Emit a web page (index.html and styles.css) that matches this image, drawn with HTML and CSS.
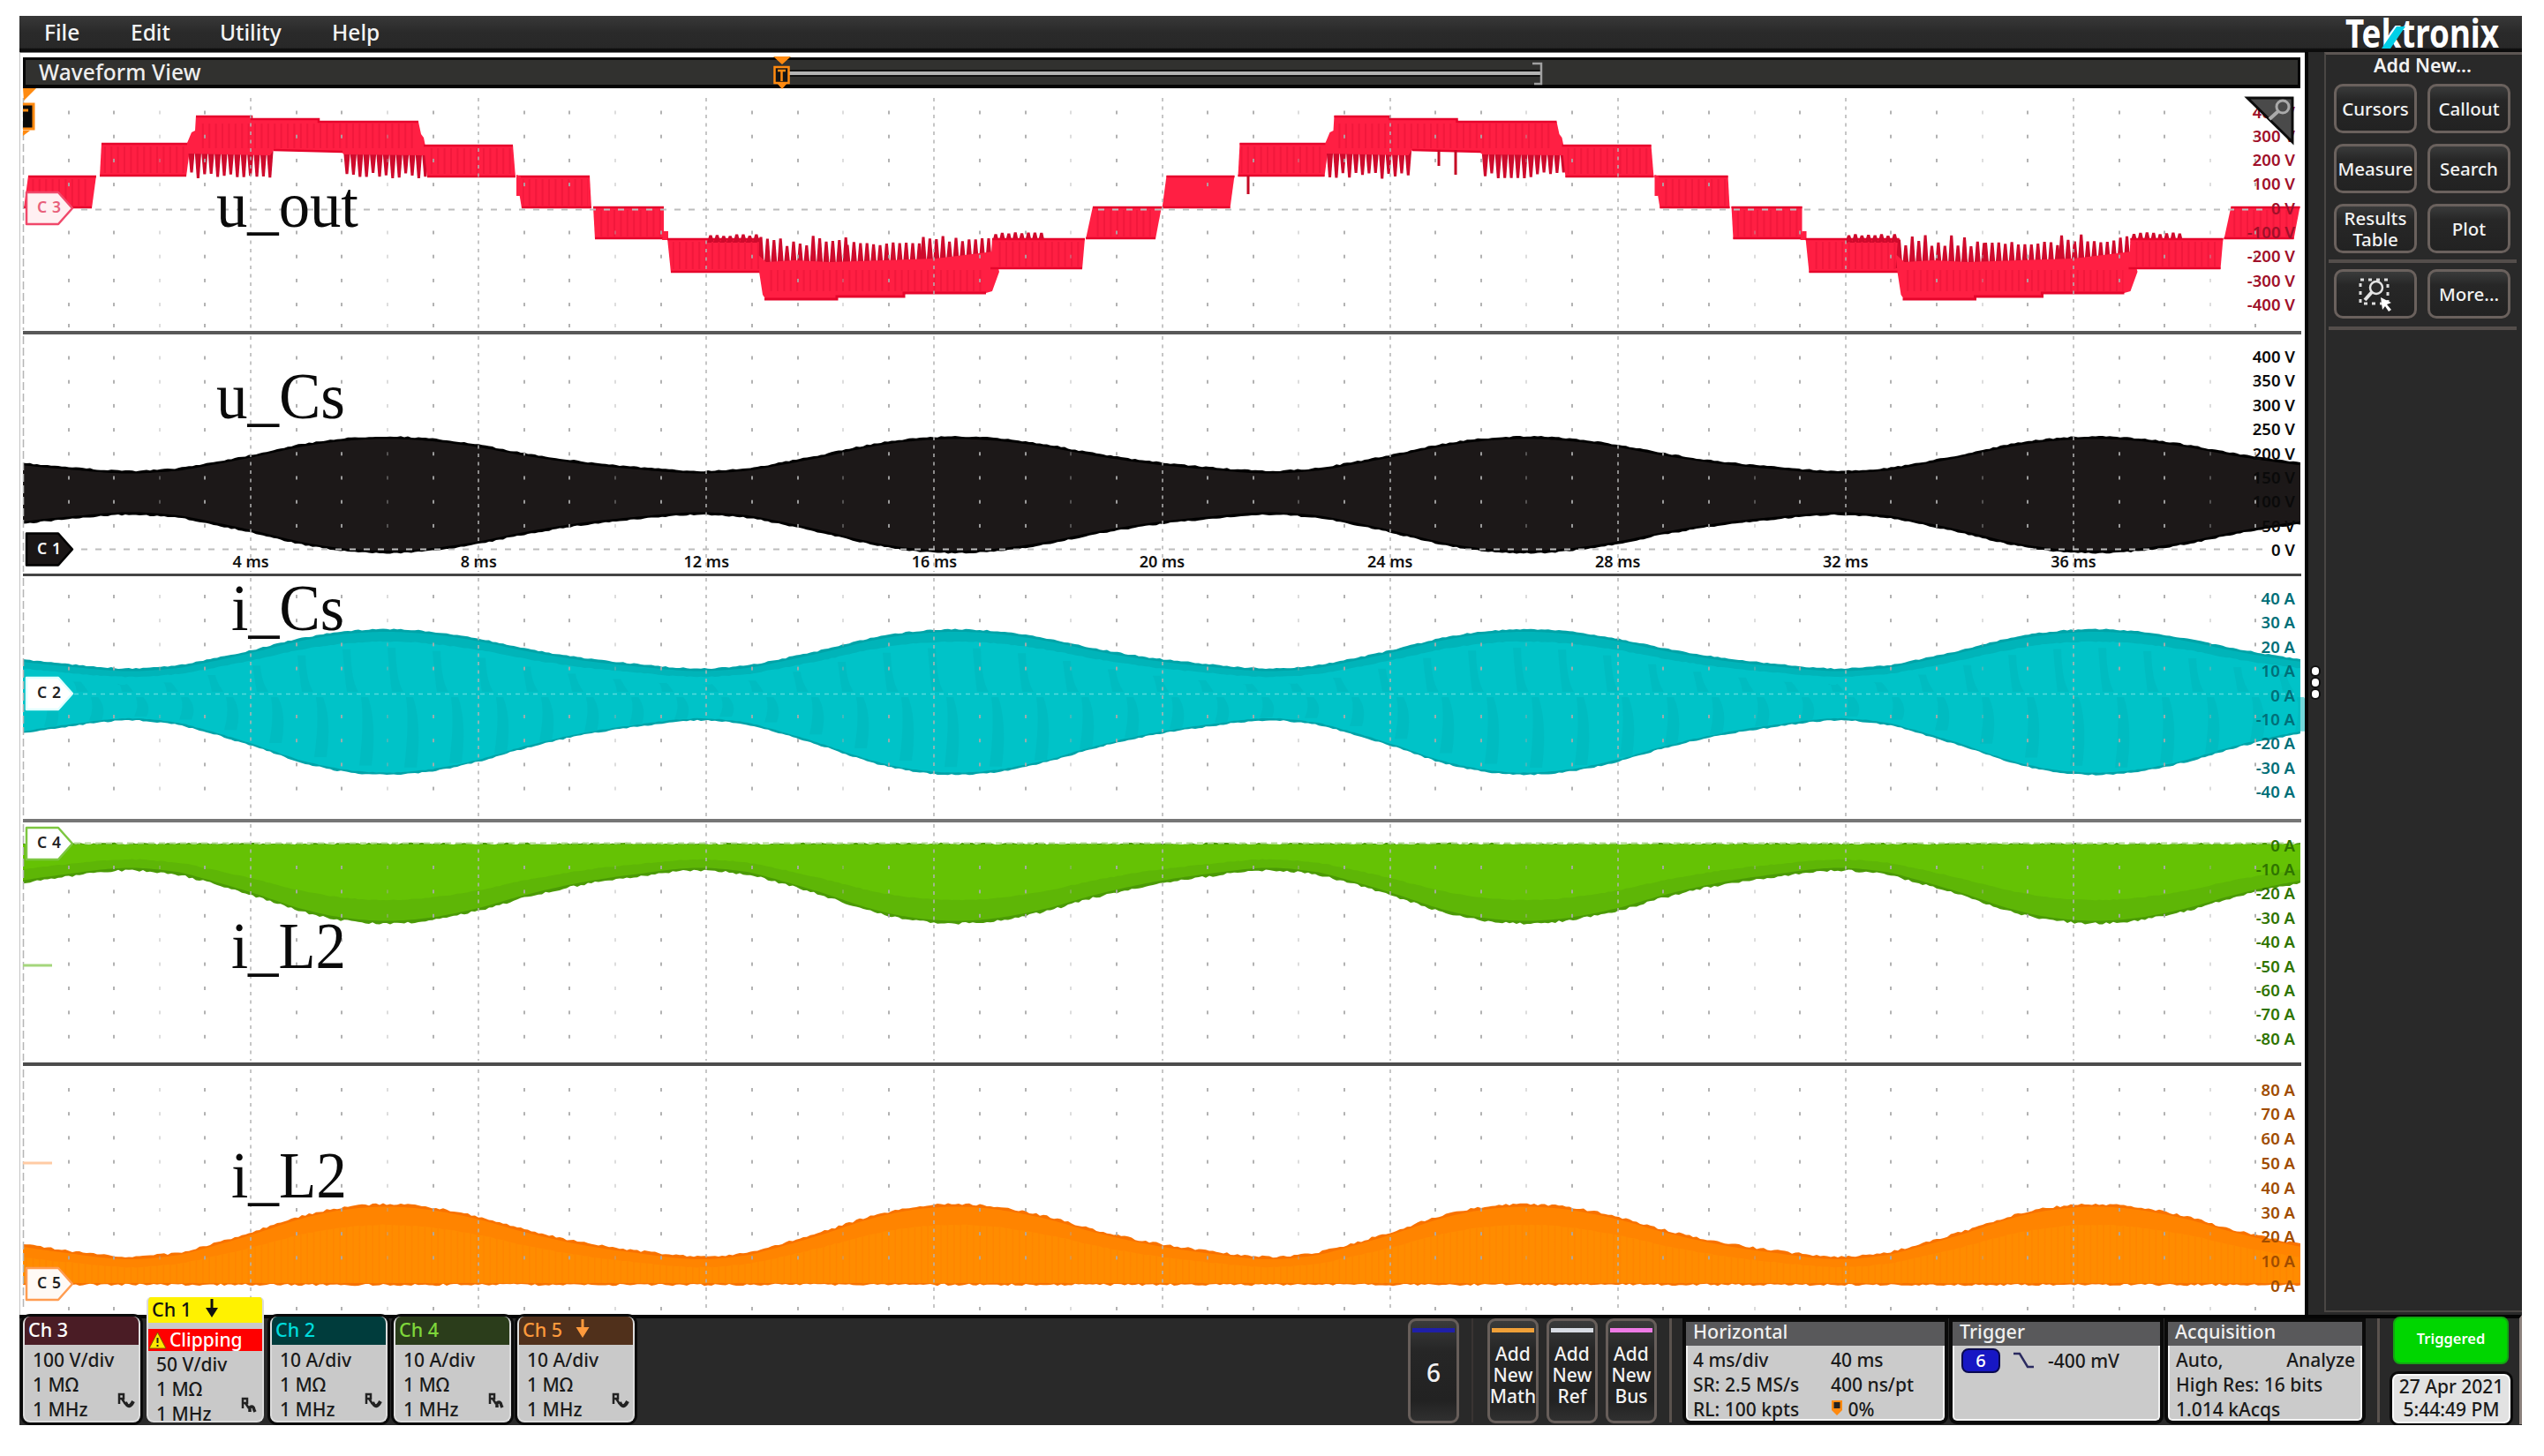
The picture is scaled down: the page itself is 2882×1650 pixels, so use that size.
FILE: index.html
```html
<!DOCTYPE html>
<html lang="en">
<head>
<meta charset="utf-8">
<title>Waveform View</title>
<link rel="stylesheet" href="styles.css">
</head>
<body>
<div class="scope">
  <header class="menu">
    <nav class="menu-items">
      <span class="m-file">File</span><span class="m-edit">Edit</span><span class="m-util">Utility</span><span class="m-help">Help</span>
    </nav>
    <svg class="logo" width="184" height="41" viewBox="0 0 184 41">
      <text x="4" y="36" font-size="44" textLength="174" lengthAdjust="spacingAndGlyphs">Tektronix</text>
      <path d="M45 37 L62 12 H72 L55 37 Z" fill="#00cfe8"/>
    </svg>
  </header>

  <div class="middle">
    <main class="view">
      <div class="view-title">
        <span>Waveform View</span>
        <svg class="zoombar" width="880" height="37" viewBox="870 64 880 37">
          <path d="M886 83 H1746" stroke="#111" stroke-width="8"/>
          <path d="M886 83 H1746" stroke="#b4b4b4" stroke-width="4"/>
          <path d="M1736 72 H1746 V95 H1738" fill="none" stroke="#a0a0a0" stroke-width="2.500"/>
          <path d="M876 64 H896 L886 73 Z M880 94 H892 L886 101 Z" fill="#ff8a10"/>
          <rect x="877.500" y="76" width="16" height="18" fill="#151515" stroke="#ff8a10" stroke-width="2.500"/>
          <path d="M881 80 H890 M885.500 80 V92" stroke="#ff8a10" stroke-width="2.500"/>
        </svg>
      </div>
      <svg class="panel" id="p3" viewBox="26 100 2581 275" height="275"></svg>
      <svg class="panel" id="p1" viewBox="26 379 2581 271" height="271"></svg>
      <svg class="panel" id="p2" viewBox="26 653 2581 275" height="275"></svg>
      <svg class="panel" id="p4" viewBox="26 932 2581 272" height="272"></svg>
      <svg class="panel last" id="p5" viewBox="26 1208 2581 280" height="280"></svg>
    </main>
    <div class="handle"><i></i><i></i><i></i></div>
    <aside class="side">
      <div class="side-title">Add New...</div>
      <div class="btn-grid">
        <button>Cursors</button><button>Callout</button>
        <button>Measure</button><button>Search</button>
        <button>Results<br>Table</button><button>Plot</button>
      </div>
      <div class="btn-grid lower">
        <button>
          <svg width="40" height="40" viewBox="0 0 40 40">
            <rect x="3" y="4" width="31" height="27" fill="none" stroke="#ddd" stroke-width="3" stroke-dasharray="4 5"/>
            <circle cx="21" cy="13" r="7" fill="#2a2a2a" stroke="#e4e4e4" stroke-width="2.500"/>
            <path d="M16 18 L8 27" stroke="#e4e4e4" stroke-width="4"/>
            <path d="M26 24 L38 30 L33 32 L38 38 L35 40 L31 34 L28 38 Z" fill="#fff"/>
          </svg>
        </button><button>More...</button>
      </div>
    </aside>
  </div>

  <footer class="bar">
    <div class="badge b3"><h4>Ch 3</h4><div class="info">100 V/div<br>1 MΩ<br>1 MHz</div>
      <svg class="bw" width="20" height="22" viewBox="0 0 20 22"><path d="M2 13 V2 H7 V7 H2 M5 7 L9 13" fill="none" stroke="#222" stroke-width="2.500"/><path d="M9 11 Q13 20 18 10" fill="none" stroke="#222" stroke-width="4"/></svg></div>
    <div class="badge b1"><h4>Ch 1 <svg width="18" height="22" viewBox="0 0 18 22"><path d="M7.500 0 H10.500 V10 H16 L9 21 L2 10 H7.500 Z" fill="#111"/></svg></h4>
      <div class="clip"><svg width="21" height="20" viewBox="0 0 21 20"><path d="M10.500 1 L20 19 H1 Z" fill="#ffe800" stroke="#7a5a00" stroke-width="1"/><path d="M10.500 7 V13 M10.500 15 V17" stroke="#222" stroke-width="2"/></svg>Clipping</div>
      <div class="info">50 V/div<br>1 MΩ<br>1 MHz</div>
      <svg class="bw" width="20" height="22" viewBox="0 0 20 22"><path d="M2 13 V2 H7 V7 H2 M5 7 L9 13" fill="none" stroke="#222" stroke-width="2.500"/><path d="M10 17 V12 Q14 9 15 15 L16 17" fill="none" stroke="#222" stroke-width="3.500"/></svg></div>
    <div class="badge b2"><h4>Ch 2</h4><div class="info">10 A/div<br>1 MΩ<br>1 MHz</div>
      <svg class="bw" width="20" height="22" viewBox="0 0 20 22"><path d="M2 13 V2 H7 V7 H2 M5 7 L9 13" fill="none" stroke="#222" stroke-width="2.500"/><path d="M9 11 Q13 20 18 10" fill="none" stroke="#222" stroke-width="4"/></svg></div>
    <div class="badge b4"><h4>Ch 4</h4><div class="info">10 A/div<br>1 MΩ<br>1 MHz</div>
      <svg class="bw" width="20" height="22" viewBox="0 0 20 22"><path d="M2 13 V2 H7 V7 H2 M5 7 L9 13" fill="none" stroke="#222" stroke-width="2.500"/><path d="M10 17 V12 Q14 9 15 15 L16 17" fill="none" stroke="#222" stroke-width="3.500"/></svg></div>
    <div class="badge b5"><h4>Ch 5 <svg width="18" height="22" viewBox="0 0 18 22"><path d="M7.500 0 H10.500 V9 H16.500 L9 21 L1.500 9 H7.500 Z" fill="#ff9a3c"/></svg></h4><div class="info">10 A/div<br>1 MΩ<br>1 MHz</div>
      <svg class="bw" width="20" height="22" viewBox="0 0 20 22"><path d="M2 13 V2 H7 V7 H2 M5 7 L9 13" fill="none" stroke="#222" stroke-width="2.500"/><path d="M9 11 Q13 20 18 10" fill="none" stroke="#222" stroke-width="4"/></svg></div>

    <div class="adders">
      <div class="tall six"><i></i><span>6</span></div>
      <div class="vsep dim"></div>
      <div class="tall math"><i></i><span>Add<br>New<br>Math</span></div>
      <div class="tall ref"><i></i><span>Add<br>New<br>Ref</span></div>
      <div class="tall bus"><i></i><span>Add<br>New<br>Bus</span></div>
      <div class="vsep"></div>
    </div>

    <div class="box horiz"><h4>Horizontal</h4>
      <div class="cols"><div>4 ms/div<br>SR: 2.5 MS/s<br>RL: 100 kpts</div>
      <div>40 ms<br>400 ns/pt<br><svg width="14" height="19" viewBox="0 0 14 19"><path d="M1 1 H13 V12 L7 18 L1 12 Z" fill="#ff8a10"/><path d="M3.500 3 H10.500 V10 H3.500 Z" fill="#222"/></svg> 0%</div></div></div>
    <div class="box trig"><h4>Trigger</h4>
      <div class="trow"><b>6</b><svg width="25" height="20" viewBox="0 0 25 20"><path d="M1 2 H8 L17 17 H24" fill="none" stroke="#2b2b60" stroke-width="2.500"/></svg><span>-400 mV</span></div></div>
    <div class="box acq"><h4>Acquisition</h4>
      <div class="lines"><div class="split"><span>Auto,</span><span>Analyze</span></div>High Res: 16 bits<br>1.014 kAcqs</div></div>
    <div class="vsep end"></div>
    <div class="status"><div class="go">Triggered</div><div class="date">27 Apr 2021<br>5:44:49 PM</div></div>
  </footer>
</div>
<script src="waves.js"></script>
</body>
</html>
```
FILE: styles.css
```css
* { box-sizing: border-box; }
body { margin: 0; background: #fff; font-family: "Noto Sans", "Open Sans", sans-serif; overflow: hidden; }
.scope { width: 2835px; height: 1597px; margin: 18px 0 0 22px; background: #292929; display: flex; flex-direction: column; }

.menu { height: 41px; display: flex; justify-content: space-between; background: linear-gradient(#383838, #2a2a2a 45%, #282828 88%, #0c0c0c 92%); color: #f4f4f4; font-size: 24.5px; font-weight: 500; }
.menu-items { display: flex; line-height: 37px; padding-left: 28px; }
.m-file { width: 98px; }
.m-edit { width: 101px; }
.m-util { width: 127px; }
.logo { margin-right: 20px; font-weight: 700; fill: #fff; overflow: visible; }

.middle { height: 1432px; display: flex; }
.view { width: 2589px; padding: 5px 5px 0 3px; background: #fff; border-top: 1px solid #777; border-left: 1px solid #c4c4c4; display: flex; flex-direction: column; }
.view-title { height: 35px; flex: none; display: flex; align-items: center; background: #31312f; border: 3px solid #050505; border-bottom-width: 4px; color: #eee; font-size: 24.5px; font-weight: 500; line-height: 28px; padding-left: 15px; }
.view-title span { width: 826px; white-space: nowrap; letter-spacing: .1px; }
.zoombar { flex: none; overflow: visible; }
.panel { width: 2581px; flex: none; display: block; box-sizing: content-box; border-bottom: 4px solid #585858; overflow: visible; }
#p1 { border-bottom-width: 3px; border-color: #444; }
#p2 { border-color: #767676; }
#p4 { border-color: #4c4c4c; }
.panel.last { border-bottom: 0; }
.scale { font-size: 18.5px; font-weight: 600; text-anchor: end; }
.time { font-size: 18px; font-weight: 600; text-anchor: middle; fill: #111; }
.tagtext { font-size: 17.5px; font-weight: 600; }
.name { font-family: "Liberation Serif", "Times New Roman", serif; font-size: 75px; fill: #0a0a0a; }

.handle { width: 22px; border-left: 4px solid #060606; background: #292929; display: flex; flex-direction: column; justify-content: center; align-items: center; gap: 4px; padding-bottom: 4px; padding-right: 2px; }
.handle i { width: 8px; height: 9px; border-radius: 4px; background: #fff; box-shadow: 0 0 0 2px #111; }
.side { flex: 1; height: 1428px; border: 2px solid #4a4644; border-right: 0; border-top: 3px solid #5d5653; padding: 0 6px 0 3px; color: #f2f2f2; }
.side-title { text-align: center; font-size: 21.5px; line-height: 24px; font-weight: 600; height: 33px; }
.btn-grid { display: grid; grid-template-columns: 94px 94px; grid-auto-rows: 56px; gap: 12px 12px; padding: 0 0 7px 6px; border-bottom: 4px solid #544e4b; }
.btn-grid.lower { padding-top: 7px; padding-bottom: 9px; }
.side button { font: inherit; font-size: 20.5px; font-weight: 500; line-height: 24px; color: #f2f2f2; padding: 0; white-space: nowrap; border: 3px solid #6a615d; border-radius: 10px; background: linear-gradient(#3a3b3b, #272727 30%, #222); display: flex; align-items: center; justify-content: center; }

.bar { height: 124px; display: flex; align-items: flex-start; border-top: 4px solid #050505; border-right: 3px solid #8a807b; padding-left: 4px; position: relative; font-size: 21px; font-weight: 500; color: #1a1a1a; margin-top: -1px; }
h4 { margin: 0; font-weight: 500; }
.badge { width: 133px; height: 120px; margin: -2px 7px 0 0; border-radius: 8px; background: #c9c9c9; overflow: hidden; position: relative; box-shadow: 0 0 0 3px #0a0a0a; border: 2px solid #dcdcdc; border-top: 0; flex: none; }
.badge h4 { height: 32px; margin: 0 -2px; line-height: 29px; padding-left: 6px; font-size: 21.5px; }
.badge h4 svg { margin-left: 8px; vertical-align: -2px; }
.badge .info { padding: 3px 0 0 9px; line-height: 28px; white-space: nowrap; }
.bw { position: absolute; right: 4px; bottom: 10px; }
.b3 h4 { background: #4a1c25; color: #fff; }
.b2 h4 { background: #003c3c; color: #00dcdc; }
.b4 h4 { background: #2b3d1b; color: #7ed63a; }
.b5 h4 { background: #50301b; color: #ff9a3c; }
.b1 { height: 142px; margin-top: -24px; box-shadow: none; border-top-left-radius: 5px; border-top-right-radius: 5px; }
.b1 h4 { background: #fff200; color: #111; height: 29px; line-height: 27px; }
.b1 .clip { margin: 7px -2px 0; height: 25px; background: #f00; color: #fff; line-height: 25px; font-size: 21px; padding-left: 2px; display: flex; align-items: center; gap: 3px; }
.b1 .info { padding-top: 1px; line-height: 28px; }
.b1 .bw { bottom: 5px; }

.adders { display: flex; margin-left: 869px; }
.tall { width: 58px; height: 119px; border: 3px solid #675e5a; border-radius: 9px; background: linear-gradient(#3a3b3b, #262626 30%, #222 80%, #303030); margin-right: 9px; color: #f2f2f2; text-align: center; font-size: 21px; line-height: 24px; display: flex; flex-direction: column; align-items: center; flex: none; }
.tall i { width: 48px; height: 5px; margin-top: 8px; flex: none; }
.tall span { margin-top: 12px; }
.six { margin-right: 14px; }
.six i { background: #1f1fa8; }
.six span { font-size: 28px; margin-top: 33px; }
.math i { background: #f0a038; }
.ref i { background: #d8dce4; }
.bus i { background: #ee7ae6; }
.vsep { width: 3px; height: 118px; background: #5a524e; margin-left: 5px; }
.vsep.dim { background: #393433; margin: 0 16px 0 0; width: 2px; }

.box { height: 112px; margin-top: 4px; background: #cbcbcb; border: 2px solid #f2f2f2; border-top: 0; box-shadow: 0 0 0 4px #0a0a0a; border-radius: 0 0 5px 5px; flex: none; font-size: 21px; line-height: 28px; white-space: nowrap; }
.box h4 { height: 27px; margin: 0 -2px; background: #59595b; color: #f0f0f0; line-height: 22px; font-size: 21.5px; padding-left: 8px; }
.horiz { width: 293px; margin-left: 16px; }
.cols { display: grid; grid-template-columns: 156px 1fr; padding: 2px 0 0 6px; }
.cols svg { vertical-align: 0; }
.trig { width: 235px; margin-left: 9px; }
.trow { display: flex; align-items: center; padding: 3px 0 0 8px; }
.trow b { width: 44px; height: 28px; line-height: 24px; border: 2px solid #0a0a50; border-radius: 8px; background: #1717c4; color: #fff; text-align: center; font-weight: 500; font-size: 20px; margin-right: 14px; }
.trow span { margin-left: 15px; }
.acq { width: 220px; margin-left: 9px; }
.lines { padding: 2px 6px 0 7px; }
.split { display: flex; justify-content: space-between; }
.vsep.end { margin-left: 17px; }
.status { width: 134px; margin-left: 14px; }
.go { height: 54px; margin: -2px 2px 11px 1px; border-radius: 8px; background: #00d600; border: 2px solid #12a512; color: #fff; font-size: 16.5px; font-weight: 600; text-align: center; line-height: 46px; }
.date { height: 56px; border-radius: 7px; background: #e2e2e2; border: 2px solid #fafafa; box-shadow: 0 0 0 3px #0a0a0a; text-align: center; line-height: 25.5px; white-space: nowrap; }
```
FILE: waves.js
```js
// Draws graticule, traces, scales and handles into the five slices.
const X0 = 26, DIV = 258.1;
let seed = 7;
const rnd = () => (seed = (seed * 16807) % 2147483647) / 2147483647;

// One 10 ms ripple period: [px from minimum, 0..1 amplitude].
const shape = [[0, 0], [55, .07], [83, .18], [141, .46], [198, .77], [244, .935], [293, 1], [342, .945], [399, .76], [451, .515], [514, .28], [577, .12], [645.3, 0]];
function amp(x) {
  const P = 645.3, p = (((x - 143) % P) + P) % P, n = shape.length - 1;
  let i = 0;
  while (i < n - 1 && shape[i + 1][0] < p) i++;
  const a = shape[i], b = shape[i + 1];
  const prev = i > 0 ? shape[i - 1] : [shape[n - 1][0] - P, shape[n - 1][1]];
  const next = i + 2 <= n ? shape[i + 2] : [shape[1][0] + P, shape[1][1]];
  const h = b[0] - a[0], t = (p - a[0]) / h;
  const m0 = (b[1] - prev[1]) / (b[0] - prev[0]) * h, m1 = (next[1] - a[1]) / (next[0] - a[0]) * h;
  return (2*t*t*t - 3*t*t + 1) * a[1] + (t*t*t - 2*t*t + t) * m0 + (3*t*t - 2*t*t*t) * b[1] + (t*t*t - t*t) * m1;
}

function band(top, bottom, fill, noise = 1.4) {
  const up = [], dn = [];
  for (let x = 26; x <= 2606; x += 4) {
    up.push(x + ',' + (top(x) + (rnd() - .5) * noise).toFixed(1));
    dn.unshift(x + ',' + (bottom(x) + (rnd() - .5) * noise).toFixed(1));
  }
  return `<polygon points="${up.concat(dn).join(' ')}" fill="${fill}"/>`;
}
const poly = (pts, fill) => `<polygon points="${pts}" fill="${fill}"/>`;

function grid(y0, y1, rows, zero) {
  let s = '';
  for (let k = 1; k < 10; k++) {
    const x = Math.round(X0 + DIV * k);
    s += `<path d="M${x} ${y0} V${y1}" stroke="#b4b4b4" stroke-width="2" stroke-dasharray="4 5.500" opacity=".75"/>`;
  }
  for (const y of rows) for (let k = 1; k < 50; k++)
    if (k % 5) s += `<rect x="${Math.round(X0 + DIV / 5 * k - 1)}" y="${y - 2}" width="2" height="4" fill="#aaa" opacity="${k % 5 === 3 ? .4 : .9}"/>`;
  if (zero) s += `<path d="M92 ${zero} H2570" stroke="#bdbdbd" stroke-width="2" stroke-dasharray="7 9"/>`;
  s += `<path d="M26.500 ${y0} V${y1}" stroke="#b5b5b5" stroke-width="1.500" stroke-dasharray="9 4"/>`;
  return s;
}
const scale = (labels, first, step, color) => labels.map((t, i) =>
  `<text class="scale" x="2600" y="${(first + step * i + 6.5).toFixed(1)}" fill="${color}">${t}</text>`).join('');
const tag = (y, text, fill, stroke, color) =>
  `<path d="M30 ${y - 18} H66 L82 ${y} L66 ${y + 18} H30 Z" fill="${fill}" stroke="${stroke}" stroke-width="2.500" stroke-linejoin="round"/>` +
  `<text class="tagtext" x="42" y="${y + 5}" fill="${color}" textLength="27">${text}</text>`;
const name = (x, y, len, t) => `<text class="name" x="${x}" y="${y}" textLength="${len}" lengthAdjust="spacingAndGlyphs">${t}</text>`;
const rows = (a, step, n) => Array.from({ length: n }, (_, i) => a + step * i);
const put = (id, s) => { document.getElementById(id).innerHTML = s; };

// Multilevel output voltage
const R = '#ff1f43', D = '#e6062c', T = '#cf0a2c';
function teeth(a, b, base, tip, jitter, step = 7.4) {
  let s = '';
  const up = tip < base ? 1 : -1;
  for (let x = a; x < b; x += step) {
    const y = tip + (rnd() - .5) * jitter;
    s += `<path d="M${(x - 4).toFixed(1)} ${base} L${(x - 1.5).toFixed(1)} ${y.toFixed(1)} H${(x + 1.5).toFixed(1)} L${(x + 4).toFixed(1)} ${base} Z" fill="${T}"/>`;
  }
  return s;
}
// Four corners clockwise from the top left, with darker rails.
function block(a, b, c, d, y1, y2) {
  return poly(`${a},${y1 - 1} ${b},${y1 - 1} ${c},${y2 + 1} ${d},${y2 + 1}`, R)
    + `<path d="M${a} ${y1} H${b} M${d} ${y2} H${c}" stroke="${D}" stroke-width="2.500"/>`;
}
function cycle() {
  let s = '';
  s += block(32, 109, 104, 27, 200, 235);
  s += block(115, 216, 211, 113, 163, 199);
  s += teeth(217, 309, 168, 199, 7) + teeth(393, 488, 170, 199, 7);
  s += poly('212,162 217,150 221,148 222,131 285,131 286,134 361,134 362,137 474,138 477,152 480,156 484,176 390,175 386,172 310,170 306,176 212,174', R);
  s += `<path d="M222 132 H285 V135 H361 V138 H474 M310 170 L388 172" fill="none" stroke="${D}" stroke-width="2.500"/>`;
  s += block(480, 581, 584, 484, 165, 200);
  s += block(585, 668, 670, 591, 200, 235) + block(672, 752, 752, 674, 235, 270);
  s += poly('585,198 585,222 589,222 590,200', R) + poly('752,262 757,262 757,272 750,272', R);
  s += block(756, 862, 866, 760, 271, 308);
  s += teeth(805, 862, 275, 266, 3) + teeth(862, 960, 304, 273, 13) + teeth(960, 1046, 304, 276, 4) + teeth(1046, 1134, 300, 270, 9) + teeth(1128, 1184, 275, 264, 3);
  s += poly('858,288 868,297 900,295 940,297 1060,293 1126,285 1132,308 1124,330 1117,332 1026,332 1024,335 950,335 948,338 868,340 864,334 860,308', R);
  s += `<path d="M866 339 H948 V336 H1024 V332 H1117" fill="none" stroke="${D}" stroke-width="3"/>`;
  s += block(1124, 1229, 1226, 1122, 271, 304);
  s += block(1238, 1316, 1309, 1230, 235, 270);
  return s;
}
let out = cycle() + `<g transform="translate(1289.500 0)">${cycle()}</g>`;
out += `<path d="M1414 199 V220 M1630 170 V188 M1649 170 V198" stroke="#c50824" stroke-width="3"/>`;
let stripes = '';
for (let x = 30; x < 2606; x += 7.4) stripes += `M${x.toFixed(1)} 130V340`;
put('p3',
  `<defs><clipPath id="c"><rect x="26" y="100" width="2580" height="276"/></clipPath><clipPath id="s">` +
  [0, 1289.5].map(o => [[116, 166, 95, 30], [224, 140, 246, 28], [486, 168, 94, 29], [592, 203, 74, 30], [676, 238, 74, 30], [762, 274, 98, 31], [870, 306, 246, 24], [1130, 274, 94, 28], [1240, 238, 68, 30]]
    .map(r => `<rect x="${r[0] + o}" y="${r[1]}" width="${r[2]}" height="${r[3]}"/>`).join('')).join('') + `<rect x="34" y="203" width="68" height="30"/></clipPath></defs>` +
  `<g clip-path="url(#c)">${out}<g clip-path="url(#s)"><path d="${stripes}" stroke="#f2183c" stroke-width="2"/></g></g>` +
  grid(111, 374, rows(127.5, 27.2, 9).filter((_, i) => i !== 4).concat(369), 237.5) +
  tag(236, 'C3', '#fff0f2', '#f0486a', '#e8607a') +
  `<path d="M26 100 H41 L27 114 Z M26 148 H34 L26 154 Z" fill="#ff8a10"/><path d="M26 118 H38 V146 H26" fill="#0a0a0a" stroke="#ff8a10" stroke-width="3"/><path d="M26 125 H32" stroke="#ff8a10" stroke-width="3"/>` +
  name(245, 256.5, 161, 'u_out') +
  scale(['400 V', '300 V', '200 V', '100 V', '0 V', '-100 V', '-200 V', '-300 V', '-400 V'], 127, 27.3, '#a0102a') +
  `<path d="M2546 111 H2597 V161 Z" fill="#4a4a4a" stroke="#0c0c0c" stroke-width="3"/><circle cx="2586" cy="121" r="7" fill="none" stroke="#aaa" stroke-width="3"/><path d="M2581 126 L2571 135" stroke="#aaa" stroke-width="4"/>`);

// Capacitor voltage
put('p1',
  band(x => 533.5 - 39 * amp(x), x => 583.5 + 43.5 * amp(x), '#000') +
  band(x => 536.5 - 39 * amp(x), x => 580.5 + 43.5 * amp(x), '#1c1818', 0) +
  grid(381, 648, rows(405.5, 27.2, 8), 622.5) + tag(622.5, 'C1', '#1a1616', '#000', '#fff') +
  name(245, 473.5, 146, 'u_Cs') +
  rows(1, 1, 9).map(k => `<text class="time" x="${X0 + DIV * k}" y="643">${k * 4} ms</text>`).join('') +
  scale(['400 V', '350 V', '300 V', '250 V', '200 V', '150 V', '100 V', '50 V', '0 V'], 404.5, 27.4, '#0a0a0a'));

// Capacitor current
let shade = '';
for (let x = 40; x < 2600; x += 51) {
  const a = amp(x);
  shade += `<path d="M${x} ${776 - 42 * a} Q${x + 1} 772 ${x + 9} 784 H${x - 4} Q${x - 6} 772 ${x - 9} ${776 - 42 * a} Z M${x + 20} 790 Q${x + 30} ${800 + 20 * a} ${x + 24} ${812 + 58 * a} H${x + 10} Q${x + 16} ${800 + 20 * a} ${x + 12} 790 Z" fill="#00b6bc" opacity=".55"/>`;
}
put('p2',
  band(x => 757.5 - 44.5 * amp(x), x => 816.5 + 61.5 * amp(x), '#00a3a8') +
  band(x => 760.5 - 44.5 * amp(x), x => 814 + 61.5 * amp(x), '#00b4b9', 0) +
  band(x => 767 - 40 * amp(x), x => 814 + 61.5 * amp(x), '#00c3c8', 1) + shade +
  grid(655, 926, rows(676, 27.2, 9).filter((_, i) => i !== 4), 0) +
  `<path d="M84 786.500 H2600" stroke="#55dadd" stroke-width="1.500" stroke-dasharray="5 5"/>` +
  tag(786, 'C2', '#fff', '#e0ffff', '#222') + name(262, 714, 128, 'i_Cs') +
  scale(['40 A', '30 A', '20 A', '10 A', '0 A', '-10 A', '-20 A', '-30 A', '-40 A'], 678.5, 27.4, '#006f78'));

// Inductor currents
put('p4',
  band(x => 956, x => 986.5 + 60 * amp(x), '#4b9a06', 2.5) +
  band(x => 957, x => 983.5 + 60 * amp(x), '#5eb606', 0) +
  band(x => 957, x => 974 + 46 * amp(x), '#65c204', 1) +
  grid(934, 1202, rows(983, 27.4, 8), 0) +
  `<path d="M84 955.500 H2600" stroke="#b5d99a" stroke-width="2" stroke-dasharray="7 5"/><path d="M26 1094 H59" stroke="#a4d67c" stroke-width="3"/>` +
  tag(956, 'C4', '#fff', '#7cc640', '#222') + name(262, 1096.5, 130, 'i_L2') +
  scale(['0 A', '-10 A', '-20 A', '-30 A', '-40 A', '-50 A', '-60 A', '-70 A', '-80 A'], 958, 27.4, '#2f7400'));
let fine = '';
for (let x = 30; x < 2606; x += 7.4) fine += `M${x.toFixed(1)} ${(1436 - 48 * amp(x)).toFixed(1)}V1454`;
put('p5',
  band(x => 1424 - 59.5 * amp(x), x => 1456, '#f87200', 2.5) +
  band(x => 1427 - 59.5 * amp(x), x => 1454, '#ff8400', 0) +
  band(x => 1436 - 48 * amp(x), x => 1454, '#ff8c00', 1) +
  `<path d="${fine}" stroke="#ff8600" stroke-width="1.500"/>` +
  grid(1212, 1484, rows(1235, 27.2, 8).concat(1483), 0) +
  `<path d="M26 1318 H59" stroke="#ffcba4" stroke-width="3"/>` +
  tag(1455, 'C5', '#fffaf5', '#ff9c50', '#222') + name(262, 1357, 131, 'i_L2') +
  scale(['80 A', '70 A', '60 A', '50 A', '40 A', '30 A', '20 A', '10 A', '0 A'], 1235, 27.8, '#a04c00'));
```
